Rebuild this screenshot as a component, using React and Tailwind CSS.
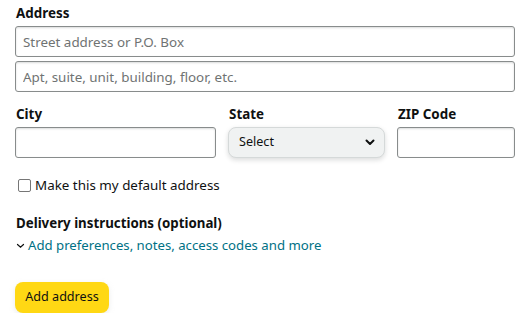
import React from "react";

export default function App() {
  return (
    <div className="w-[522px] h-[313px] bg-white text-[#0f1111] pl-[15px] pr-[7px] pt-[3px]" style={{ fontFamily: '"Noto Sans", Arial, sans-serif' }}>
      <div className="text-[13.4px] font-bold leading-[20px] pl-[1px]">Address</div>
      <input
        className="block mt-[3px] w-[500px] h-[31px] border border-[#888c8c] rounded-[3px] px-[7px] text-[13.4px] placeholder-[#6f7373] outline-none shadow-[inset_0_1px_2px_rgba(15,17,17,0.15)]"
        placeholder="Street address or P.O. Box"
      />
      <input
        className="block mt-[4px] w-[500px] h-[31px] border border-[#888c8c] rounded-[3px] px-[7px] text-[13.4px] placeholder-[#6f7373] outline-none shadow-[inset_0_1px_2px_rgba(15,17,17,0.15)]"
        placeholder="Apt, suite, unit, building, floor, etc."
      />
      <div className="flex mt-[12px]">
        <div className="w-[201px]">
          <div className="text-[13.4px] font-bold leading-[20px] pl-[1px]">City</div>
          <input className="block mt-[3px] w-[201px] h-[31px] border border-[#888c8c] rounded-[3px] px-[7px] text-[13.4px] outline-none shadow-[inset_0_1px_2px_rgba(15,17,17,0.15)]" />
        </div>
        <div className="w-[157px] ml-[12px]">
          <div className="text-[13.4px] font-bold leading-[20px] pl-[1px]">State</div>
          <div className="mt-[3px] w-[157px] h-[31px] rounded-[8px] bg-[#f0f2f2] border border-[#d5d9d9] shadow-[0_2px_5px_rgba(15,17,17,0.15)] flex items-center justify-between pl-[10px] pr-[9px] text-[12.6px]">
            <span>Select</span>
            <svg width="10" height="7" viewBox="0 0 10 7" fill="none">
              <path d="M1.5 1.5 L5 5 L8.5 1.5" stroke="#0f1111" strokeWidth="2" strokeLinecap="round" strokeLinejoin="round" />
            </svg>
          </div>
        </div>
        <div className="w-[118px] ml-[12px]">
          <div className="text-[13.4px] font-bold leading-[20px] pl-[1px]">ZIP Code</div>
          <input className="block mt-[3px] w-[118px] h-[31px] border border-[#888c8c] rounded-[3px] px-[7px] text-[13.4px] outline-none shadow-[inset_0_1px_2px_rgba(15,17,17,0.15)]" />
        </div>
      </div>
      <label className="flex items-center mt-[17px] ml-[3px] text-[13.4px] leading-[20px]">
        <span className="inline-block w-[13px] h-[13px] border border-[#767676] rounded-[2px] bg-white mr-[4px]"></span>
        Make this my default address
      </label>
      <div className="text-[13.3px] font-bold leading-[20px] mt-[18px] pl-[1px]">Delivery instructions (optional)</div>
      <div className="flex items-center mt-[2px] text-[13.2px] leading-[20px] text-[#007185]">
        <svg width="9" height="6" viewBox="0 0 9 6" className="mr-[3px] ml-[1px] mt-[2px]" fill="none">
          <path d="M1.5 1.5 L4.5 4.2 L7.5 1.5" stroke="#0f1111" strokeWidth="1.2" strokeLinecap="round" />
        </svg>
        Add preferences, notes, access codes and more
      </div>
      <button className="mt-[27px] w-[94px] h-[31px] rounded-[8px] bg-[#ffd814] text-[12.6px] text-[#0f1111] shadow-[0_2px_5px_rgba(213,217,217,0.5)]">
        Add address
      </button>
    </div>
  );
}
